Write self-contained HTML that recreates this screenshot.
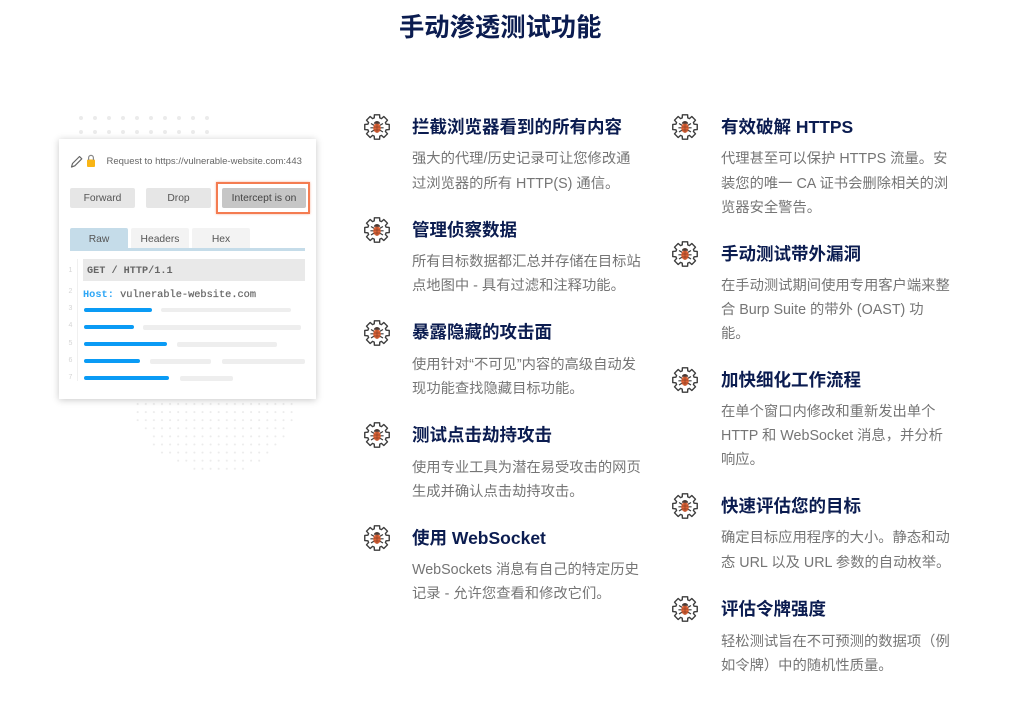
<!DOCTYPE html>
<html lang="zh"><head><meta charset="utf-8"><style>
html,body{margin:0;padding:0;background:#fff}
#p{position:relative;width:1024px;height:705px;overflow:hidden;background:#fff;font-family:"Liberation Sans","Noto Sans CJK SC",sans-serif}
.t,.h,.b{position:absolute;white-space:nowrap;line-height:24px;height:24px}
.h{font-size:17.5px;font-weight:700;color:#0b1c50}
.b{font-size:14.3px;color:#757575;transform:translateY(1px)}
.i{position:absolute;width:28px;height:28px}
.u{position:absolute;white-space:nowrap}
.btn{position:absolute;top:188px;height:20px;background:#e6e6e6;border-radius:2px;font-size:10.3px;line-height:22px;text-align:center;color:#555}
.tab{position:absolute;top:228px;height:20px;width:58px;background:#f3f3f3;border-radius:2px 2px 0 0;font-size:10.3px;line-height:24px;text-align:center;color:#555}
.bar{position:absolute;height:4px;border-radius:2px;background:#0a9bf5}
.gr{position:absolute;height:4.5px;border-radius:2px;background:#eeeeee}
.n{position:absolute;left:68px;width:5px;font-size:7px;color:#d5d5d5;text-align:center;line-height:10px}
</style></head><body><div id="p">
<svg width="0" height="0" style="position:absolute"><defs><g id="ic">
<polygon points="11.22,4.91 11.4,1.77 16.6,1.77 16.78,4.91 18.46,5.61 20.81,3.51 24.49,7.19 22.39,9.54 23.09,11.22 26.23,11.4 26.23,16.6 23.09,16.78 22.39,18.46 24.49,20.81 20.81,24.49 18.46,22.39 16.78,23.09 16.6,26.23 11.4,26.23 11.22,23.09 9.54,22.39 7.19,24.49 3.51,20.81 5.61,18.46 4.91,16.78 1.77,16.6 1.77,11.4 4.91,11.22 5.61,9.54 3.51,7.19 7.19,3.51 9.54,5.61" fill="none" stroke="#3d3d3d" stroke-width="1.4" stroke-linejoin="round"/>
<path d="M8 10.5l3 1.8M20 10.5l-3 1.8M7.4 14.8h3.500M20.600 14.800h-3.500M8 19l3-1.800M20 19l-3-1.800" stroke="#3d3d3d" stroke-width="1.200" fill="none"/>
<ellipse cx="14" cy="15" rx="3.800" ry="4.800" fill="#dc6236"/>
<path d="M10.800 10.800a3.200 2.800 0 0 1 6.400 0z" fill="#4a3a35"/>
<path d="M14 11v9M11 14h6M11 17h6" stroke="#8a4026" stroke-width=".7" fill="none"/>
</g>
<pattern id="d1" x="79" y="116" width="14" height="14" patternUnits="userSpaceOnUse"><circle cx="2" cy="2" r="2" fill="#ebebeb"/></pattern>
<pattern id="d2" x="135.700" y="402" width="8.100" height="8.100" patternUnits="userSpaceOnUse"><circle cx="2" cy="2" r="1" fill="#ebebeb"/></pattern>
</defs></svg>

<div class="t" style="left:399px;top:10px;height:36px;line-height:36px;font-size:25.3px;font-weight:700;color:#0b1c50">手动渗透测试功能</div>

<svg class="u" style="left:0;top:0" width="340" height="480">
<rect x="79" y="116" width="132" height="24" fill="url(#d1)"/>
<path d="M135.700 402H293V424H285V441H277V449H269V457H261V465H245V473H192V465H176V457H160V449H152V433H144V424H135.700Z" fill="url(#d2)"/>
</svg>

<div class="u" style="left:59px;top:139px;width:257px;height:260px;background:#fff;box-shadow:0 1px 7px rgba(0,0,0,.22)"></div>

<svg class="u" style="left:69px;top:153px" width="32" height="18">
<path d="M2.500 14l1-3.500 7-7 2.300 2.300-7 7z" fill="none" stroke="#666" stroke-width="1.200" stroke-linejoin="round"/>
<rect x="18" y="6.500" width="8" height="7.500" rx="1" fill="#f9b515"/>
<path d="M19.600 7V4.800a2.400 2.400 0 0 1 4.800 0V7" fill="none" stroke="#888" stroke-width="1.200"/>
</svg>
<div class="u" style="left:106.500px;top:155px;font-size:9.500px;line-height:13px;color:#666">Request to https://vulnerable-website.com:443</div>

<div class="btn" style="left:70px;width:65px">Forward</div>
<div class="btn" style="left:146px;width:65px">Drop</div>
<div class="u" style="left:216px;top:182px;width:90px;height:28px;border:2px solid #f47c51;box-shadow:0 0 2px rgba(244,124,81,.6)"></div>
<div class="btn" style="left:222px;width:84px;background:#c6c6c6;color:#444">Intercept is on</div>

<div class="tab" style="left:70px;background:#c5dce9;width:58px">Raw</div>
<div class="tab" style="left:131px">Headers</div>
<div class="tab" style="left:192px">Hex</div>
<div class="u" style="left:70px;top:248px;width:235px;height:2.500px;background:#c5dce9"></div>

<div class="u" style="left:77px;top:259px;width:1px;height:122px;background:#f0f0f0"></div>
<div class="u" style="left:83px;top:259px;width:222px;height:22px;background:#e9e9e9;font:bold 10.200px/25px 'Liberation Mono',monospace;color:#666;text-indent:4px">GET / HTTP/1.1</div>
<div class="u" style="left:83px;top:289px;font:10.300px/13px 'Liberation Mono',monospace;color:#555;white-space:pre"><span style="color:#2ea6f5;font-weight:700">Host:</span> <span style="color:#666;-webkit-text-stroke:.2px #666">vulnerable-website.com</span></div>

<div class="n" style="top:266px">1</div><div class="n" style="top:287px">2</div><div class="n" style="top:304px">3</div><div class="n" style="top:321px">4</div><div class="n" style="top:339px">5</div><div class="n" style="top:356px">6</div><div class="n" style="top:373px">7</div>

<div class="bar" style="left:84px;top:308px;width:68px"></div><div class="gr" style="left:161px;top:307.500px;width:130px"></div>
<div class="bar" style="left:84px;top:325px;width:50px"></div><div class="gr" style="left:143px;top:325px;width:158px"></div>
<div class="bar" style="left:84px;top:342px;width:83px"></div><div class="gr" style="left:177px;top:342px;width:100px"></div>
<div class="bar" style="left:84px;top:359px;width:56px"></div><div class="gr" style="left:150px;top:359px;width:61px"></div><div class="gr" style="left:222px;top:359px;width:83px"></div>
<div class="bar" style="left:84px;top:376px;width:85px"></div><div class="gr" style="left:180px;top:376px;width:53px"></div>

<svg class="i" style="left:363px;top:113px" viewBox="0 0 28 28"><use href="#ic"/></svg>
<div class="h" style="left:412px;top:115px">拦截浏览器看到的所有内容</div>
<div class="b" style="left:412px;top:146px">强大的代理/历史记录可让您修改通</div>
<div class="b" style="left:412px;top:171px">过浏览器的所有 HTTP(S) 通信。</div>

<svg class="i" style="left:363px;top:216px" viewBox="0 0 28 28"><use href="#ic"/></svg>
<div class="h" style="left:412px;top:218px">管理侦察数据</div>
<div class="b" style="left:412px;top:249px">所有目标数据都汇总并存储在目标站</div>
<div class="b" style="left:412px;top:273px">点地图中 - 具有过滤和注释功能。</div>

<svg class="i" style="left:363px;top:319px" viewBox="0 0 28 28"><use href="#ic"/></svg>
<div class="h" style="left:412px;top:320px">暴露隐藏的攻击面</div>
<div class="b" style="left:412px;top:352px">使用针对“不可见”内容的高级自动发</div>
<div class="b" style="left:412px;top:376px">现功能查找隐藏目标功能。</div>

<svg class="i" style="left:363px;top:421px" viewBox="0 0 28 28"><use href="#ic"/></svg>
<div class="h" style="left:412px;top:423px">测试点击劫持攻击</div>
<div class="b" style="left:412px;top:455px">使用专业工具为潜在易受攻击的网页</div>
<div class="b" style="left:412px;top:479px">生成并确认点击劫持攻击。</div>

<svg class="i" style="left:363px;top:524px" viewBox="0 0 28 28"><use href="#ic"/></svg>
<div class="h" style="left:412px;top:526px">使用 WebSocket</div>
<div class="b" style="left:412px;top:557px">WebSockets 消息有自己的特定历史</div>
<div class="b" style="left:412px;top:581px">记录 - 允许您查看和修改它们。</div>

<svg class="i" style="left:671px;top:113px" viewBox="0 0 28 28"><use href="#ic"/></svg>
<div class="h" style="left:721px;top:115px">有效破解 HTTPS</div>
<div class="b" style="left:721px;top:146px">代理甚至可以保护 HTTPS 流量。安</div>
<div class="b" style="left:721px;top:171px">装您的唯一 CA 证书会删除相关的浏</div>
<div class="b" style="left:721px;top:195px">览器安全警告。</div>

<svg class="i" style="left:671px;top:240px" viewBox="0 0 28 28"><use href="#ic"/></svg>
<div class="h" style="left:721px;top:242px">手动测试带外漏洞</div>
<div class="b" style="left:721px;top:273px">在手动测试期间使用专用客户端来整</div>
<div class="b" style="left:721px;top:297px">合 Burp Suite 的带外 (OAST) 功</div>
<div class="b" style="left:721px;top:321px">能。</div>

<svg class="i" style="left:671px;top:366px" viewBox="0 0 28 28"><use href="#ic"/></svg>
<div class="h" style="left:721px;top:368px">加快细化工作流程</div>
<div class="b" style="left:721px;top:399px">在单个窗口内修改和重新发出单个</div>
<div class="b" style="left:721px;top:423px">HTTP 和 WebSocket 消息，并分析</div>
<div class="b" style="left:721px;top:447px">响应。</div>

<svg class="i" style="left:671px;top:492px" viewBox="0 0 28 28"><use href="#ic"/></svg>
<div class="h" style="left:721px;top:494px">快速评估您的目标</div>
<div class="b" style="left:721px;top:525px">确定目标应用程序的大小。静态和动</div>
<div class="b" style="left:721px;top:550px">态 URL 以及 URL 参数的自动枚举。</div>

<svg class="i" style="left:671px;top:595px" viewBox="0 0 28 28"><use href="#ic"/></svg>
<div class="h" style="left:721px;top:597px">评估令牌强度</div>
<div class="b" style="left:721px;top:629px">轻松测试旨在不可预测的数据项（例</div>
<div class="b" style="left:721px;top:653px">如令牌）中的随机性质量。</div>
</div></body></html>
